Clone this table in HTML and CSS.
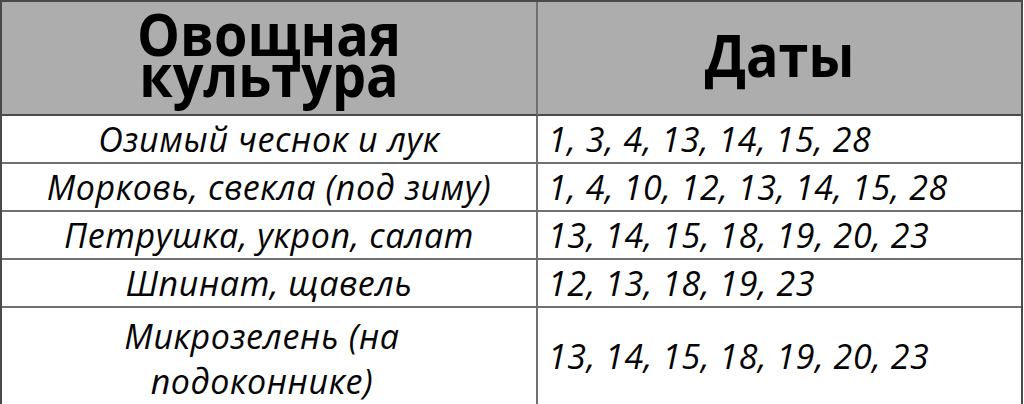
FILE: index.html
```html
<!DOCTYPE html>
<html lang="ru">
<head>
<meta charset="utf-8">
<link rel="stylesheet" href="styles.css">
</head>
<body>
<table class="sched">
  <thead>
    <tr>
      <th class="head head-crop"><span class="tall">Овощная<br>культура</span></th>
      <th class="head head-dates"><span class="tall">Даты</span></th>
    </tr>
  </thead>
  <tbody>
    <tr class="row">
      <td class="crop">Озимый чеснок и лук</td>
      <td class="dates">1, 3, 4, 13, 14, 15, 28</td>
    </tr>
    <tr class="row">
      <td class="crop">Морковь, свекла (под зиму)</td>
      <td class="dates">1, 4, 10, 12, 13, 14, 15, 28</td>
    </tr>
    <tr class="row">
      <td class="crop">Петрушка, укроп, салат</td>
      <td class="dates">13, 14, 15, 18, 19, 20, 23</td>
    </tr>
    <tr class="row">
      <td class="crop">Шпинат, щавель</td>
      <td class="dates">12, 13, 18, 19, 23</td>
    </tr>
    <tr class="row row-last">
      <td class="crop crop-wrap">Микрозелень (на<br>подоконнике)</td>
      <td class="dates">13, 14, 15, 18, 19, 20, 23</td>
    </tr>
  </tbody>
</table>
</body>
</html>
```
FILE: styles.css
```css
html, body {
  margin: 0;
  padding: 0;
  background: #ffffff;
}

.sched {
  border-collapse: separate;
  border-spacing: 0;
  table-layout: fixed;
  width: 1023px;
  border: 2px solid #4a4a4a;
  font-family: "Open Sans", "Noto Sans", sans-serif;
  color: #050505;
}

.sched th,
.sched td {
  padding: 0;
  vertical-align: middle;
  border-right: 2px solid #707070;
  border-bottom: 2px solid #707070;
}

.sched th:last-child,
.sched td:last-child {
  border-right: 0;
}

.row-last td {
  border-bottom: 0;
}

.head {
  background: #adadad;
  height: 112px;
  font-weight: 700;
  color: #000;
  border-bottom-color: #4a4a4a !important;
}

.tall {
  display: inline-block;
  transform: translateY(-4px) scaleY(1.09);
}

.head-crop {
  width: 534px;
  font-size: 54px;
  line-height: 37px;
  text-align: center;
}

.head-dates {
  font-size: 54px;
  line-height: 1;
  text-align: center;
}

.row td {
  height: 46px;
  font-style: italic;
  font-size: 34px;
  letter-spacing: 0.6px;
  line-height: 45px;
}

.row-last td {
  height: 92px;
}

.row-last td.crop-wrap {
  height: 86px;
  padding-top: 6px;
  padding-right: 14px;
}

.crop {
  text-align: center;
}

.dates {
  text-align: left;
  padding-left: 10px !important;
}
```
